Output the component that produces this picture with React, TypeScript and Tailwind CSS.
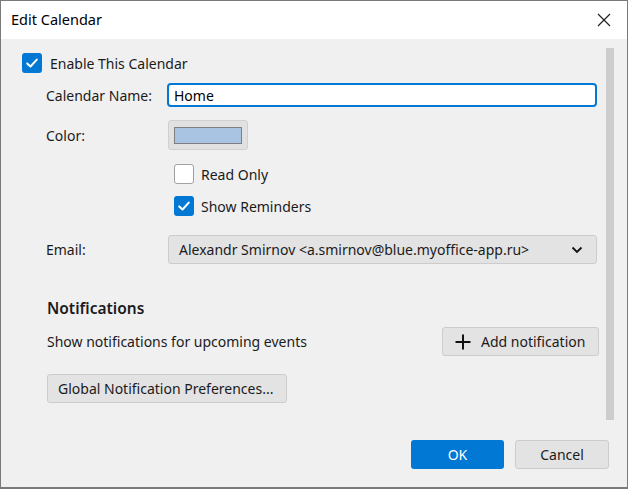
import React from "react";

const font = { fontFamily: '"Noto Sans", "Open Sans", sans-serif' };

function Check({ checked }: { checked: boolean }) {
  if (checked) {
    return (
      <div className="w-[20px] h-[20px] rounded-[3px] bg-[#0078d4] flex items-center justify-center shrink-0">
        <svg width="14" height="14" viewBox="0 0 14 14">
          <path d="M2.2 7.4 L5.5 10.5 L11.8 3.6" fill="none" stroke="white" strokeWidth="2" strokeLinecap="round" strokeLinejoin="round" />
        </svg>
      </div>
    );
  }
  return <div className="w-[20px] h-[20px] rounded-[3px] bg-white border border-[#a0a0a0] shrink-0" />;
}

export default function App() {
  return (
    <div style={font} className="w-[628px] h-[489px] border border-[#7a7a7a] border-b-2 flex flex-col text-[14px] text-[#1b1b1b] bg-[#f0f0f0] overflow-hidden whitespace-nowrap">
      <div className="h-[38px] shrink-0 bg-white flex items-center justify-between pl-[10px] pr-[16px]">
        <span className="text-[14.5px] text-black">Edit Calendar</span>
        <svg width="14" height="14" viewBox="0 0 14 14">
          <path d="M1 1 L13 13 M13 1 L1 13" stroke="#222" strokeWidth="1.2" />
        </svg>
      </div>
      <div className="flex-1 flex flex-col">
        <div className="flex h-[382px] shrink-0">
          <div className="flex-1 flex flex-col pl-[21px] pt-[14px]">
            <div className="flex items-center h-[20px] gap-[8px]">
              <Check checked />
              <span>Enable This Calendar</span>
            </div>
            <div className="flex items-center mt-[10px] h-[24px]">
              <span className="w-[145px] shrink-0 pl-[24px]">Calendar Name:</span>
              <div className="w-[430px] shrink-0 h-[24px] border-2 border-[#0078d4] rounded-[4px] bg-white flex items-center pl-[5px] text-black">
                Home
              </div>
            </div>
            <div className="flex items-center mt-[13px] h-[30px]">
              <span className="w-[146px] shrink-0 pl-[24px]">Color:</span>
              <div className="w-[80px] shrink-0 h-[30px] rounded-[3px] bg-[#e1e1e1] border border-[#d0d0d0] flex items-center justify-center">
                <div className="w-[68px] h-[17px] bg-[#a9c4e3] border border-[#7f7f7f]" />
              </div>
            </div>
            <div className="flex items-center mt-[14px] h-[20px] pl-[152px] gap-[7px]">
              <Check checked={false} />
              <span>Read Only</span>
            </div>
            <div className="flex items-center mt-[12px] h-[20px] pl-[152px] gap-[7px]">
              <Check checked />
              <span>Show Reminders</span>
            </div>
            <div className="flex items-center mt-[19px] h-[29px]">
              <span className="w-[146px] shrink-0 pl-[24px]">Email:</span>
              <div className="w-[429px] shrink-0 h-[29px] rounded-[3px] bg-[#e3e3e3] border border-[#cccccc] flex items-center justify-between pl-[10px] pr-[13px]">
                <span>Alexandr Smirnov &lt;a.smirnov@blue.myoffice-app.ru&gt;</span>
                <svg width="12" height="8" viewBox="0 0 12 8">
                  <path d="M1.5 1.5 L6 6 L10.5 1.5" fill="none" stroke="#111" strokeWidth="1.8" />
                </svg>
              </div>
            </div>
            <div className="mt-[34px] h-[22px] flex items-center pl-[25px] text-[15.5px] font-semibold">Notifications</div>
            <div className="flex items-center justify-between mt-[7px] h-[29px] pl-[25px] pr-[7px]">
              <span>Show notifications for upcoming events</span>
              <div className="w-[157px] shrink-0 h-[29px] rounded-[3px] bg-[#e3e3e3] border border-[#cccccc] flex items-center pl-[12px] gap-[10px]">
                <svg width="16" height="16" viewBox="0 0 16 16">
                  <path d="M8 0.5 V15.5 M0.5 8 H15.5" stroke="#111" strokeWidth="2" />
                </svg>
                <span>Add notification</span>
              </div>
            </div>
            <div className="mt-[18px] ml-[25px] w-[240px] h-[29px] rounded-[3px] bg-[#e3e3e3] border border-[#cccccc] flex items-center pl-[10px]">
              Global Notification Preferences...
            </div>
          </div>
          <div className="w-[21px] shrink-0 pt-[9px]">
            <div className="w-[8px] h-[372px] bg-[#cdcdcd]" />
          </div>
        </div>
        <div className="flex justify-end gap-[11px] pr-[18px] mt-[19px]">
          <div className="w-[93px] h-[29px] rounded-[3px] bg-[#0078d4] text-white flex items-center justify-center">OK</div>
          <div className="w-[94px] h-[29px] rounded-[3px] bg-[#e3e3e3] border border-[#cccccc] flex items-center justify-center">Cancel</div>
        </div>
      </div>
    </div>
  );
}
